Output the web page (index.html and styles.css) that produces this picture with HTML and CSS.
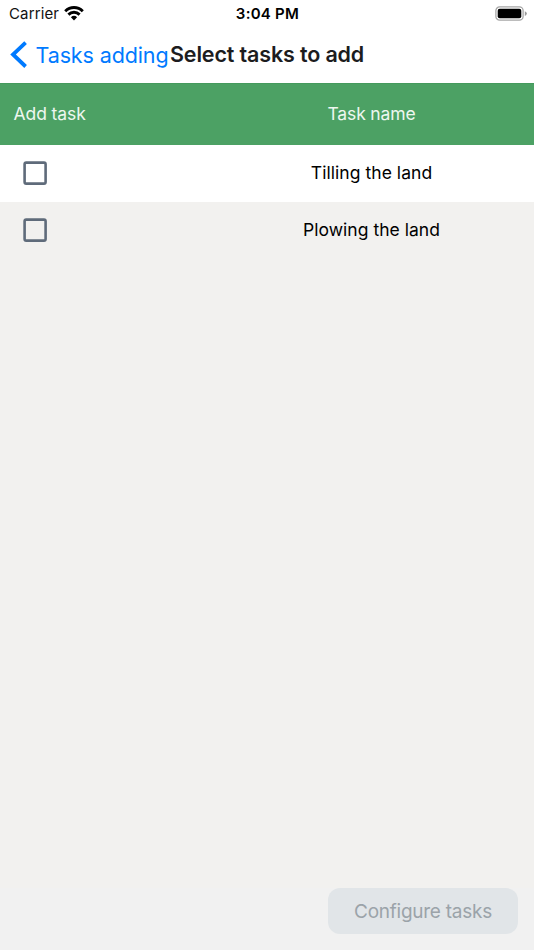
FILE: index.html
```html
<!DOCTYPE html>
<html lang="en">
<head>
<meta charset="utf-8">
<title>Select tasks to add</title>
<link rel="stylesheet" href="styles.css">
</head>
<body>
<div class="screen">
  <header class="top">
    <div class="status">
      <div class="carrier"><span class="carrier-name">Carrier</span>
        <svg class="wifi" width="20" height="15" viewBox="0 0 20 15" fill="none" stroke="#000" stroke-width="2.9"><path d="M1.2 5.2C6.3.3 13.7.3 18.8 5.2M4.4 8.6c3.2-3.1 8-3.1 11.2 0"/><path d="M6.9 11.2a4.5 4.5 0 0 1 6.2 0L10 14.5z" fill="#000" stroke="none"/></svg>
      </div>
      <span class="time">3:04 PM</span>
      <svg class="battery" width="32" height="16" viewBox="0 0 32 16"><rect x=".9" y=".9" width="27.2" height="13.2" rx="3.7" fill="none" stroke="#a6a6a6" stroke-width="1.3"/><rect x="2.7" y="2.7" width="23.6" height="9.6" rx="2" fill="#000"/><path d="M29.8 5.2q2 .8 2 2.4t-2 2.4z" fill="#999"/></svg>
    </div>
    <nav class="nav">
      <a class="back"><svg width="18" height="28" viewBox="0 0 18 28" fill="none" stroke="#007aff" stroke-width="3.8"><path d="M15.6 1.6 3 13.5l12.6 12"/></svg><span class="back-label">Tasks adding</span></a>
      <h1 class="title">Select tasks to add</h1>
    </nav>
  </header>
  <div class="row head"><div class="cell-check"><span class="add">Add task</span></div><div class="cell-name"><span class="name-head">Task name</span></div></div>
  <div class="row white"><div class="cell-check"><svg class="box" width="24" height="24" viewBox="0 0 24 24"><rect x="1.6" y="1.6" width="21" height="21" rx="1.6"/></svg></div><div class="cell-name"><span class="tilling">Tilling the land</span></div></div>
  <div class="row"><div class="cell-check"><svg class="box" width="24" height="24" viewBox="0 0 24 24"><rect x="1.6" y="1.6" width="21" height="21" rx="1.6"/></svg></div><div class="cell-name"><span class="plowing">Plowing the land</span></div></div>
  <footer class="footer"><button class="configure" disabled><span class="configure-label">Configure tasks</span></button></footer>
</div>
</body>
</html>
```
FILE: styles.css
```css
* { box-sizing: border-box; }
body { margin: 0; font-family: Inter, "Liberation Sans", sans-serif; }
.screen { width: 534px; height: 950px; display: flex; flex-direction: column; background: #f2f1ef; overflow: hidden; }
.top { height: 83px; background: #fff; }
.status { height: 27px; display: grid; grid-template-columns: 1fr auto 1fr; align-items: center; padding: 1px 7px 0 9px; font-size: 15px; line-height: 20px; color: #111; }
.carrier { display: flex; align-items: center; gap: 5px; }
.carrier-name { letter-spacing: .13px; padding-bottom: 1px; }
.wifi { margin-top: -2px; }
.time { font-weight: 600; letter-spacing: .25px; padding: 0 1px 1px 0; color: #000; }
.battery { justify-self: end; }
.nav { display: flex; align-items: center; height: 55px; padding-left: 10px; line-height: 30px; white-space: nowrap; }
.back { display: flex; align-items: center; width: 160px; gap: 7.5px; color: #007aff; font-size: 21.5px; }
.back svg { flex: none; }
.back-label { letter-spacing: -.12px; }
.title { margin: 0; padding-bottom: 1px; color: #1c1c1e; font-size: 21.5px; font-weight: 600; letter-spacing: -.15px; }
.row { height: 57px; flex: none; display: flex; align-items: center; padding-bottom: 1px; font-size: 17.5px; line-height: 24px; color: #000; }
.head { height: 61.6px; padding-bottom: 0; background: #4ca164; color: #eef7f0; border-top: 1px solid #459a5d; }
.white { background: #fff; }
.cell-check { width: 209px; padding-left: 13.5px; }
.cell-name { width: 325px; text-align: center; }
.add { letter-spacing: -.08px; }
.name-head { letter-spacing: -.14px; }
.tilling { letter-spacing: .05px; }
.plowing { letter-spacing: .02px; }
.box { display: block; margin-left: 9.5px; fill: none; stroke: #5f6b7a; stroke-width: 2.6; }
.footer { height: 62px; margin-top: auto; display: flex; justify-content: flex-end; align-items: flex-start; padding-right: 16px; background: #f1f1f1; }
.configure { width: 190px; height: 46px; padding: 2px 0 0; border: 0; border-radius: 12px; background: #e1e5e8; color: #9ba3a9; font: 400 19px/26px Inter, "Liberation Sans", sans-serif; }
.configure-label { letter-spacing: -.25px; }
```
